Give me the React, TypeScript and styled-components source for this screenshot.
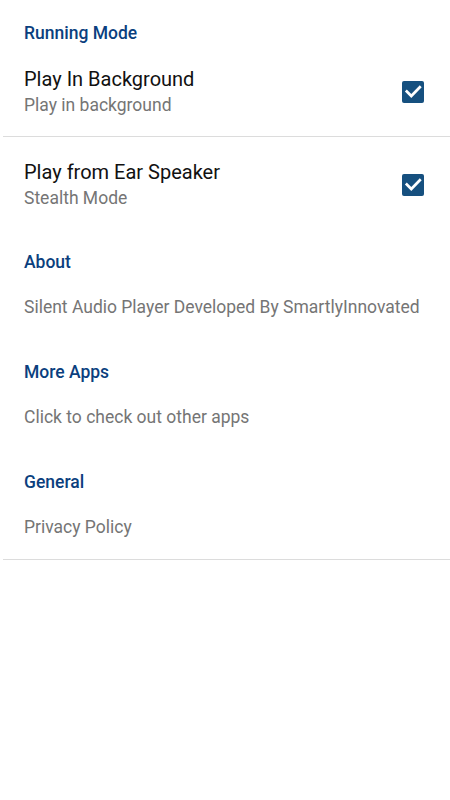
import React, {FC} from 'react';
import styled, {createGlobalStyle} from 'styled-components';

const GlobalStyle = createGlobalStyle`
  html, body {
    margin: 0;
    padding: 0;
    background: #ffffff;
  }
  body {
    font-family: Roboto, "Noto Sans", "Liberation Sans", sans-serif;
    -webkit-font-smoothing: antialiased;
  }
`;

const Screen = styled.div`
  width: 450px;
  min-height: 800px;
  background: #ffffff;
  display: flex;
  flex-direction: column;
`;

const Category = styled.section`
  display: flex;
  flex-direction: column;
  padding-top: 22px;
`;

const CategoryTitle = styled.div`
  padding: 0 24px;
  font-size: 17.5px;
  line-height: 22px;
  font-weight: 500;
  color: #0b3f7e;
`;

const Divider = styled.div`
  height: 1px;
  margin-left: 3px;
  background: #dcdcdc;
`;

const CheckRow = styled.div`
  display: flex;
  align-items: center;
  padding: 22px 26px 19px 24px;
`;

const TextCol = styled.div`
  flex: 1;
  display: flex;
  flex-direction: column;
`;

const Title = styled.div`
  font-size: 20px;
  line-height: 26px;
  color: #111111;
`;

const Summary = styled.div`
  margin-top: 1px;
  font-size: 17.5px;
  line-height: 24px;
  color: #757575;
`;

const SimpleRow = styled.div`
  padding: 23px 24px 21px;
  font-size: 17.5px;
  line-height: 22px;
  color: #757575;
`;

const Box = styled.div`
  width: 22px;
  height: 22px;
  border-radius: 2px;
  background: #16507f;
  flex-shrink: 0;
`;

const CheckBox: FC = () => (
  <Box>
    <svg width="22" height="22" viewBox="0 0 22 22">
      <path
        d="M4.8 10.4 L9.3 15 L17.8 6.2"
        fill="none"
        stroke="#ffffff"
        strokeWidth="2.7"
        strokeLinecap="square"
      />
    </svg>
  </Box>
);

interface CheckItemProps {
  title: string;
  summary: string;
}

const CheckItem: FC<CheckItemProps> = ({title, summary}) => (
  <CheckRow>
    <TextCol>
      <Title>{title}</Title>
      <Summary>{summary}</Summary>
    </TextCol>
    <CheckBox />
  </CheckRow>
);

const App: FC = () => (
  <Screen>
    <GlobalStyle />
    <Category>
      <CategoryTitle>Running Mode</CategoryTitle>
      <CheckItem title="Play In Background" summary="Play in background" />
      <Divider />
      <CheckItem title="Play from Ear Speaker" summary="Stealth Mode" />
    </Category>
    <Category>
      <CategoryTitle>About</CategoryTitle>
      <SimpleRow>Silent Audio Player Developed By SmartlyInnovated</SimpleRow>
    </Category>
    <Category>
      <CategoryTitle>More Apps</CategoryTitle>
      <SimpleRow>Click to check out other apps</SimpleRow>
    </Category>
    <Category>
      <CategoryTitle>General</CategoryTitle>
      <SimpleRow>Privacy Policy</SimpleRow>
    </Category>
    <Divider />
  </Screen>
);

export default App;
